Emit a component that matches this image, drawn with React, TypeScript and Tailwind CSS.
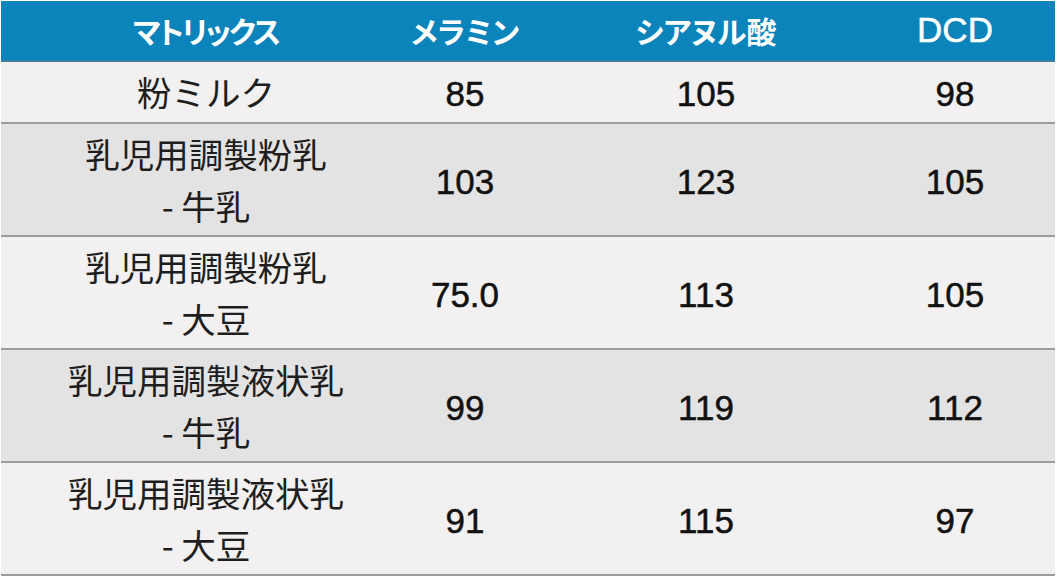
import React from "react";

type Row = {
  matrix: string[];
  melamine: string;
  cyanuric: string;
  dcd: string;
};

const rows: Row[] = [
  { matrix: ["粉ミルク"], melamine: "85", cyanuric: "105", dcd: "98" },
  { matrix: ["乳児用調製粉乳", "- 牛乳"], melamine: "103", cyanuric: "123", dcd: "105" },
  { matrix: ["乳児用調製粉乳", "- 大豆"], melamine: "75.0", cyanuric: "113", dcd: "105" },
  { matrix: ["乳児用調製液状乳", "- 牛乳"], melamine: "99", cyanuric: "119", dcd: "112" },
  { matrix: ["乳児用調製液状乳", "- 大豆"], melamine: "91", cyanuric: "115", dcd: "97" },
];

const jp = "font-['Noto_Sans_CJK_JP',sans-serif]";
const num = "font-['Liberation_Sans','Noto_Sans_CJK_JP',sans-serif] [-webkit-text-stroke:0.5px_#111] text-[35px] pt-[5px]";
const head = `${jp} font-bold text-[30px] [font-feature-settings:'palt'] whitespace-nowrap`;

const App: React.FC = () => {
  return (
    <div className="w-[1058px] h-[578px] bg-white pl-[1px] pt-[1px]">
      <div className="w-[1054px]">
        {/* header */}
        <div className="grid grid-cols-[410px_108px_374px_1fr] h-[61px] bg-[#0b83bb] border-b-2 border-[#3f7d9c] text-white items-center text-center">
          <div className={`${head} tracking-[-2px]`}>マトリックス</div>
          <div className={head}>メラミン</div>
          <div className={head}>シアヌル酸</div>
          <div className="font-['Liberation_Sans',sans-serif] text-[35px] pr-[38px] [-webkit-text-stroke:0.5px_#fff]">DCD</div>
        </div>

        {rows.map((row, i) => (
          <div
            key={i}
            className={`grid grid-cols-[410px_108px_374px_1fr] items-center text-center text-[#111] border-b-2 border-[#9c9c9c] ${
              row.matrix.length > 1 ? "h-[113px]" : "h-[62px]"
            } ${i % 2 === 0 ? "bg-[#f2f0f0]" : "bg-[#e4e3e3]"}`}
          >
            <div className={`${jp} text-[34.5px] leading-[52px] pb-[2px] whitespace-nowrap text-[#1e1e1e]`}>
              {row.matrix.map((line, j) => (
                <div key={j}>{line}</div>
              ))}
            </div>
            <div className={num}>{row.melamine}</div>
            <div className={num}>{row.cyanuric}</div>
            <div className={`${num} pr-[38px]`}>{row.dcd}</div>
          </div>
        ))}
      </div>
    </div>
  );
};

export default App;
